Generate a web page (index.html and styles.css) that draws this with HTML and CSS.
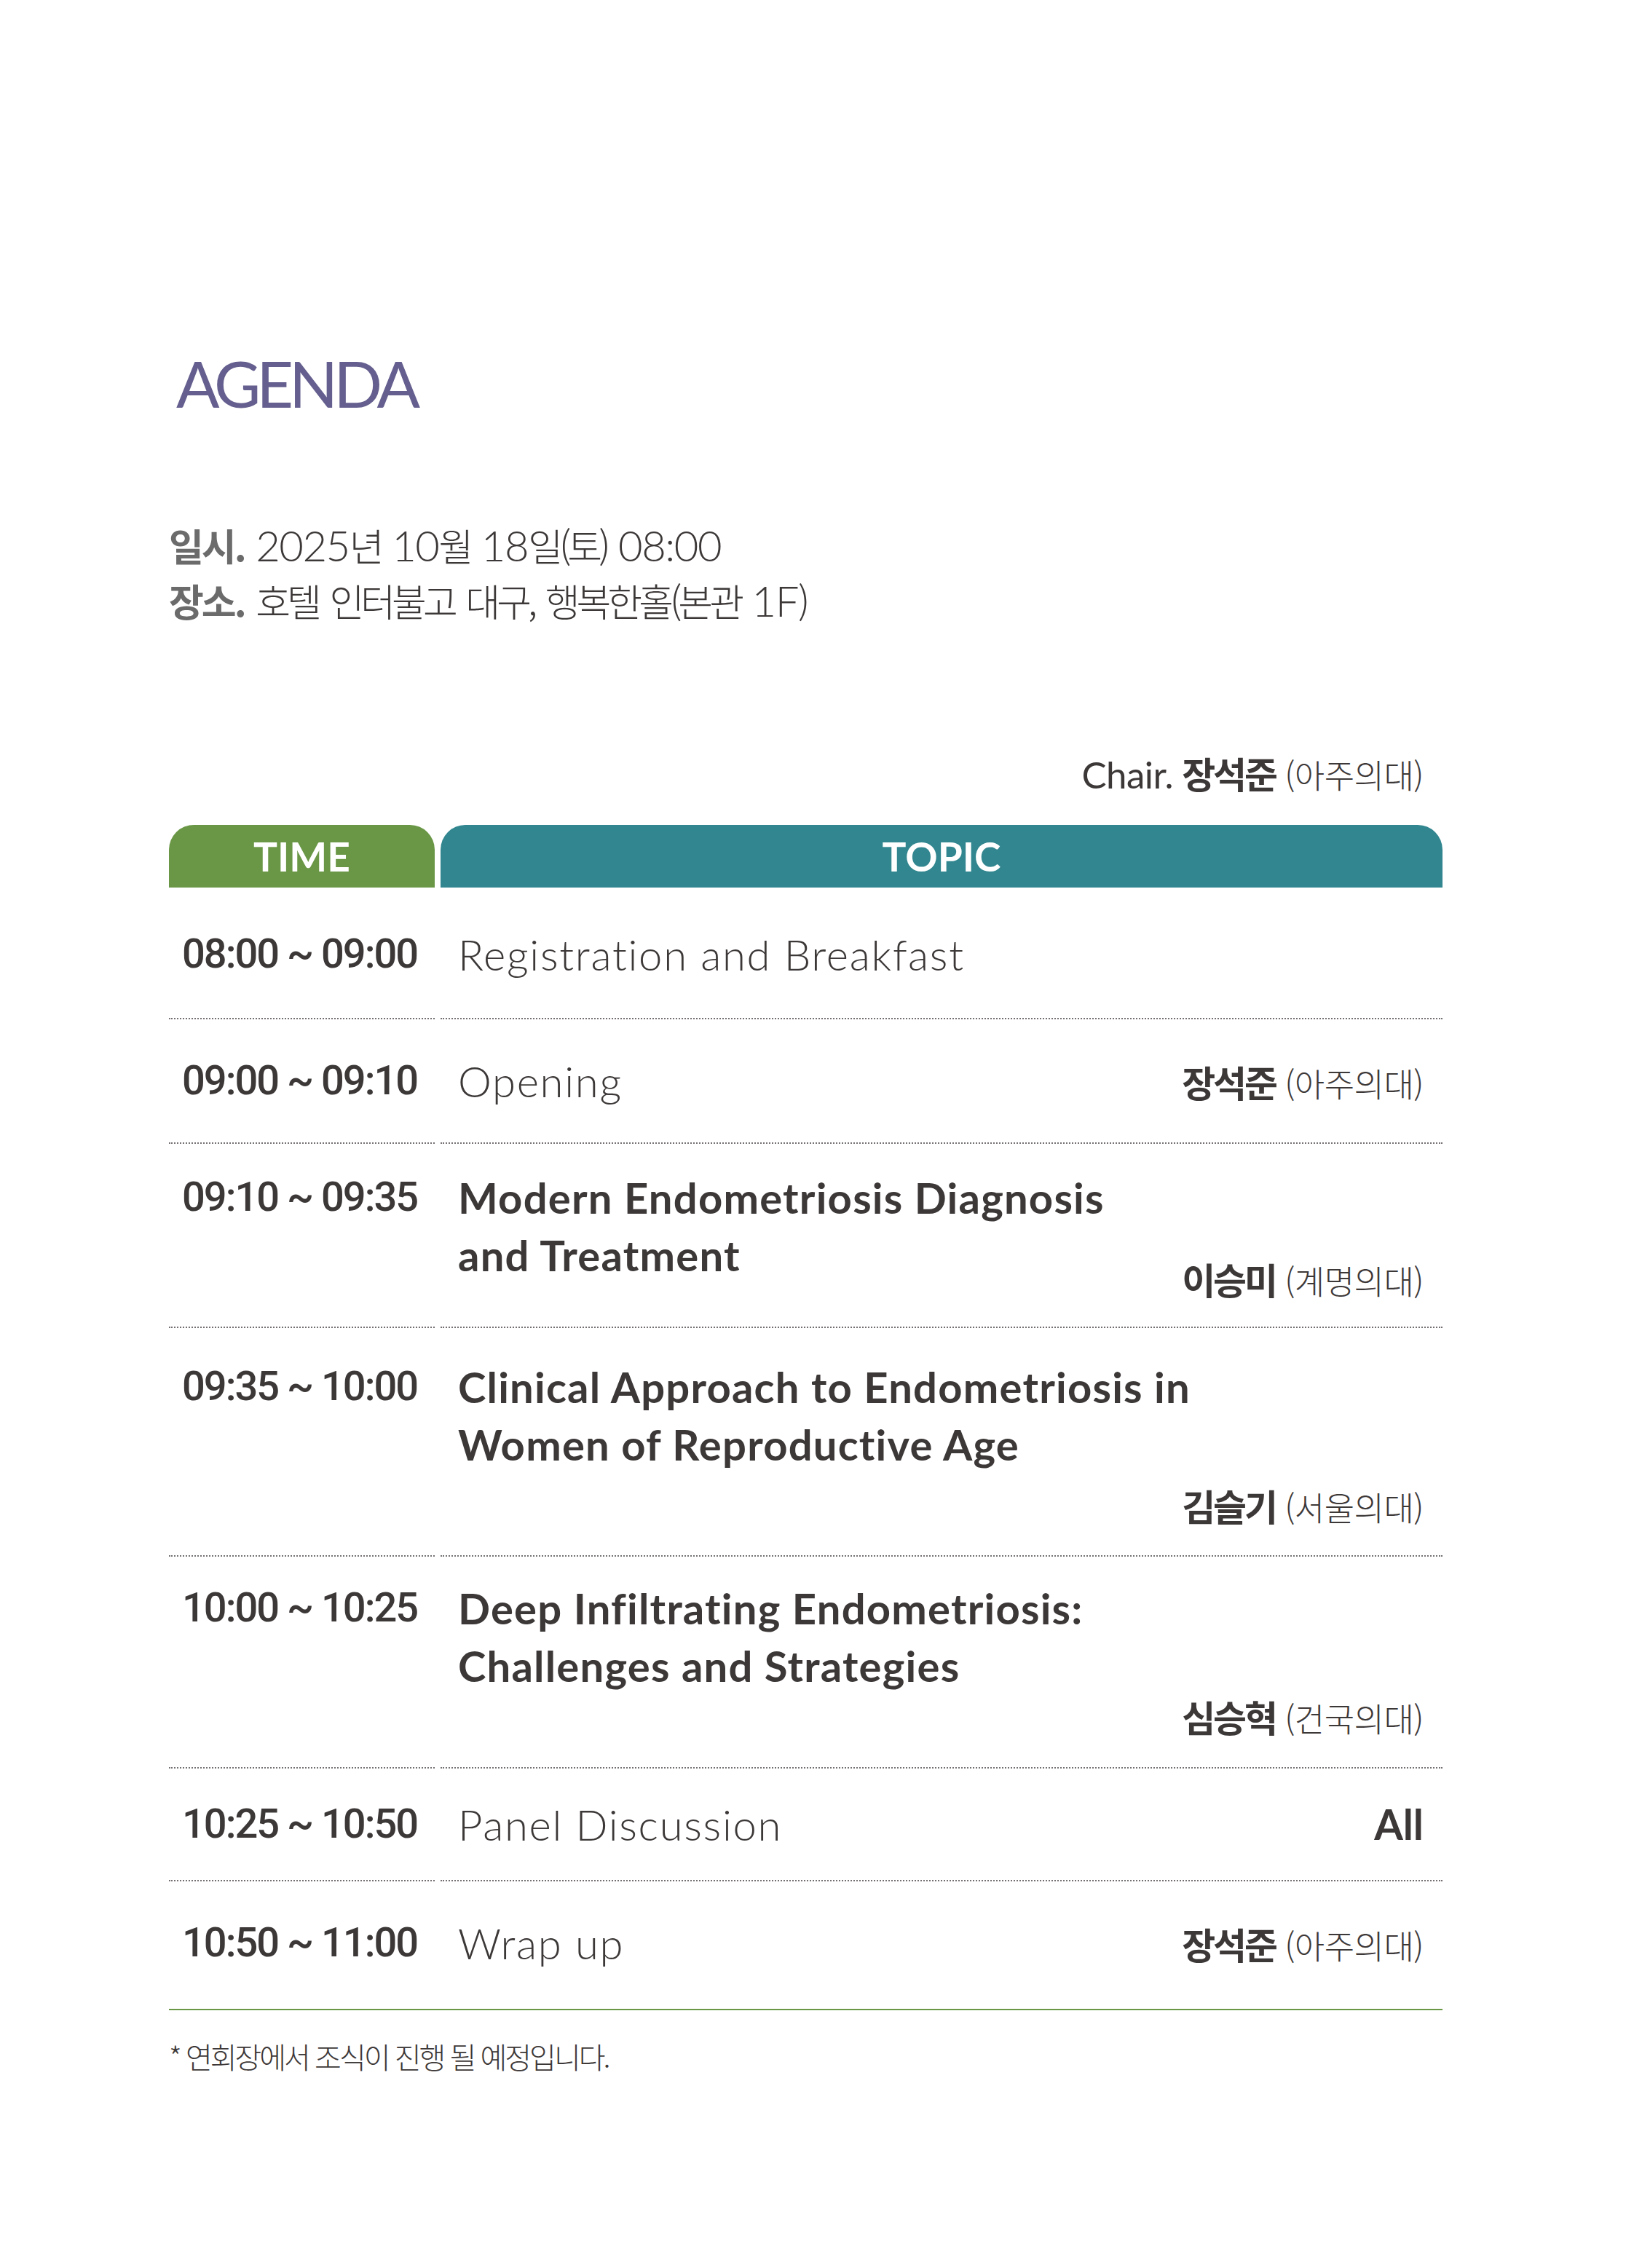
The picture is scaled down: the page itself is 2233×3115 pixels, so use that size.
FILE: index.html
```html
<!DOCTYPE html>
<html lang="ko">
<head>
<meta charset="utf-8">
<title>AGENDA</title>
<link rel="stylesheet" href="styles.css">
</head>
<body>
<main class="page">
  <h1 class="title">AGENDA</h1>

  <div class="info">
    <p class="info-line"><span class="info-label">일시.</span> <span class="num">2025</span>년 <span class="num">10</span>월 <span class="num">18</span>일(토) <span class="num">08:00</span></p>
    <p class="info-line"><span class="info-label">장소.</span> 호텔 인터불고 대구, 행복한홀(본관 <span class="num">1F</span>)</p>
  </div>

  <div class="chair">
    <span class="speaker"><span class="chair-label">Chair.</span><span class="name">장석준</span><span class="affil">(아주의대)</span></span>
  </div>

  <div class="table">
    <div class="head">
      <div class="head-cell head-time">TIME</div>
      <div class="head-cell head-topic">TOPIC</div>
    </div>

    <div class="row r1">
      <div class="cell-time">08:00 ~ 09:00</div>
      <div class="cell-topic">
        <span class="topic">Registration and Breakfast</span>
      </div>
    </div>

    <div class="row r2">
      <div class="cell-time">09:00 ~ 09:10</div>
      <div class="cell-topic">
        <span class="topic">Opening</span>
        <span class="speaker"><span class="name">장석준</span><span class="affil">(아주의대)</span></span>
      </div>
    </div>

    <div class="row r3">
      <div class="cell-time">09:10 ~ 09:35</div>
      <div class="cell-topic stack">
        <span class="topic strong">Modern Endometriosis Diagnosis<br>and Treatment</span>
        <span class="speaker"><span class="name">이승미</span><span class="affil">(계명의대)</span></span>
      </div>
    </div>

    <div class="row r4">
      <div class="cell-time">09:35 ~ 10:00</div>
      <div class="cell-topic stack">
        <span class="topic strong">Clinical Approach to Endometriosis in<br>Women of Reproductive Age</span>
        <span class="speaker"><span class="name">김슬기</span><span class="affil">(서울의대)</span></span>
      </div>
    </div>

    <div class="row r5">
      <div class="cell-time">10:00 ~ 10:25</div>
      <div class="cell-topic stack">
        <span class="topic strong">Deep Infiltrating Endometriosis:<br>Challenges and Strategies</span>
        <span class="speaker"><span class="name">심승혁</span><span class="affil">(건국의대)</span></span>
      </div>
    </div>

    <div class="row r6">
      <div class="cell-time">10:25 ~ 10:50</div>
      <div class="cell-topic">
        <span class="topic">Panel Discussion</span>
        <span class="all">All</span>
      </div>
    </div>

    <div class="row r7">
      <div class="cell-time">10:50 ~ 11:00</div>
      <div class="cell-topic">
        <span class="topic">Wrap up</span>
        <span class="speaker"><span class="name">장석준</span><span class="affil">(아주의대)</span></span>
      </div>
    </div>
  </div>

  <p class="note">* 연회장에서 조식이 진행 될 예정입니다.</p>
</main>
</body>
</html>
```

FILE: styles.css
```css
html, body {
  margin: 0;
  padding: 0;
  background: #ffffff;
}

body {
  color: #3d3838;
  font-family: Lato, "Noto Sans CJK KR", sans-serif;
}

.page {
  width: 1749px;
  padding: 482px 0 200px 232px;
}

.title {
  margin: 0;
  padding-left: 10px;
  font-family: Lato, sans-serif;
  font-weight: 400;
  font-size: 88px;
  line-height: 88px;
  letter-spacing: -6px;
  color: #645f8e;
}

.info {
  margin-top: 141px;
}

.info-line {
  margin: 0;
  height: 76px;
  font-family: "Noto Sans CJK KR", sans-serif;
  font-weight: 300;
  font-size: 52px;
  line-height: 76px;
  letter-spacing: -5px;
  word-spacing: 6px;
  color: #3d3838;
  white-space: nowrap;
}

.info-label {
  font-weight: 700;
  letter-spacing: -3px;
  color: #6b6b6b;
}

.num {
  font-family: Lato, sans-serif;
  font-weight: 300;
  font-size: 58px;
  line-height: 60px;
  letter-spacing: -1.5px;
}

.chair {
  display: flex;
  justify-content: flex-end;
  margin: 168px 0 42px;
  padding-right: 26px;
}

.speaker {
  display: flex;
  align-items: baseline;
  column-gap: 12px;
  height: 60px;
  line-height: 60px;
  white-space: nowrap;
}

.chair-label {
  font-family: Lato, sans-serif;
  font-weight: 400;
  font-size: 51px;
  letter-spacing: -0.5px;
}

.name {
  font-family: "Noto Sans CJK KR", sans-serif;
  font-weight: 700;
  font-size: 50px;
  letter-spacing: -3px;
  color: #3d3838;
}

.affil {
  font-family: "Noto Sans CJK KR", sans-serif;
  font-weight: 300;
  font-size: 45px;
  letter-spacing: -0.5px;
  color: #3d3838;
}

.table {
  border-bottom: 2px solid #6a9746;
}

.head {
  display: grid;
  grid-template-columns: 365px 1376px;
  column-gap: 8px;
}

.head-cell {
  height: 86px;
  display: flex;
  align-items: center;
  justify-content: center;
  border-radius: 34px 34px 0 0;
  color: #ffffff;
  font-family: Lato, sans-serif;
  font-weight: 700;
  font-size: 55px;
}

.head-time {
  background: #6a9746;
}

.head-topic {
  background: #31868f;
}

.row {
  display: grid;
  grid-template-columns: 365px 1376px;
  column-gap: 8px;
}

.cell-time,
.cell-topic {
  padding-top: var(--pt);
  padding-bottom: var(--pb);
  border-bottom: 2px dotted #747070;
}

.row:last-child .cell-time,
.row:last-child .cell-topic {
  border-bottom: none;
}

.cell-time {
  padding-left: 18px;
  font-family: Roboto, sans-serif;
  font-weight: 500;
  font-size: 56px;
  line-height: 79px;
  letter-spacing: -2px;
  white-space: nowrap;
}

.cell-topic {
  display: flex;
  align-items: center;
  justify-content: space-between;
  padding-left: 24px;
  padding-right: 26px;
}

.cell-topic.stack {
  flex-direction: column;
  align-items: stretch;
}

.topic {
  font-family: Lato, sans-serif;
  font-weight: 300;
  font-size: 58px;
  line-height: 79px;
  letter-spacing: 1.7px;
}

.topic.strong {
  font-weight: 700;
  letter-spacing: 1.2px;
}

.stack .speaker {
  align-self: flex-end;
  margin-top: var(--sm);
}

.all {
  font-family: Lato, sans-serif;
  font-weight: 700;
  font-size: 57px;
  line-height: 79px;
}

.r1 { --pt: 52px; --pb: 48px; }
.r2 { --pt: 45px; --pb: 45px; }
.r3 { --pt: 34px; --pb: 36px; --sm: -37px; }
.r4 { --pt: 41px; --pb: 39px; --sm: 14px; }
.r5 { --pt: 31px; --pb: 40px; --sm: 0px; }
.r6 { --pt: 37px; --pb: 37px; }
.r7 { --pt: 45px; --pb: 51px; }

.note {
  margin: 38px 0 0;
  font-family: "Noto Sans CJK KR", sans-serif;
  font-weight: 300;
  font-size: 40px;
  line-height: 50px;
  letter-spacing: -3px;
  color: #3d3838;
}
```
